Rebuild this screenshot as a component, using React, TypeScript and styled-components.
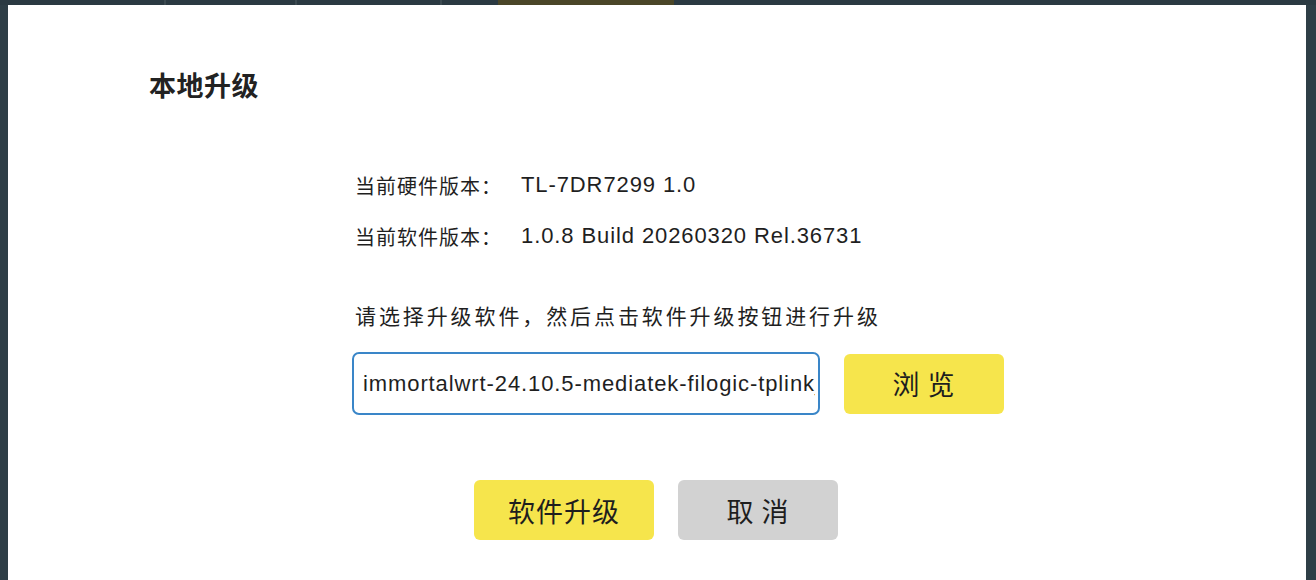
import React from "react";
import styled, { createGlobalStyle } from "styled-components";

const GlobalStyle = createGlobalStyle`
  html, body { margin: 0; padding: 0; }
  body {
    background: #2c3b43;
    font-family: "Liberation Sans", "Noto Sans CJK SC", sans-serif;
    overflow: hidden;
  }
`;

const Page = styled.div`
  width: 1316px;
  height: 580px;
  display: flex;
  flex-direction: column;
  overflow: hidden;
`;

const TopStrip = styled.div`
  height: 5px;
  display: flex;
  flex: none;
`;

const StripSeg = styled.div<{ $w?: number; $tone?: string; $divider?: boolean }>`
  box-sizing: border-box;
  width: ${(p) => (p.$w ? `${p.$w}px` : "auto")};
  flex: ${(p) => (p.$w ? "none" : "1")};
  background: ${(p) => p.$tone || "#2b3a42"};
  border-right: ${(p) => (p.$divider ? "2px solid #3c4a51" : "none")};
`;

const Stage = styled.div`
  flex: 1;
  display: flex;
  padding: 0 10px 0 8px;
  background: #2e3e46;
`;

const Modal = styled.div`
  flex: 1;
  background: #ffffff;
  display: flex;
  flex-direction: column;
  padding: 66px 0 0 0;
`;

const Title = styled.h2`
  margin: 0 0 0 141px;
  font-size: 27px;
  line-height: 32px;
  font-weight: 700;
  color: #222222;
  letter-spacing: 0.5px;
`;

const Body = styled.div`
  margin: 67px 0 0 344px;
  display: flex;
  flex-direction: column;
`;

const InfoList = styled.div`
  display: flex;
  flex-direction: column;
  gap: 21px;
`;

const InfoLine = styled.div`
  display: flex;
  align-items: center;
  height: 30px;
  color: #1f1f1f;
  font-size: 20px;
`;

const Label = styled.span`
  letter-spacing: 1px;
  width: 166px;
  padding-left: 3px;
  flex: none;
`;

const Value = styled.span`
  font-size: 22px;
  letter-spacing: 0.9px;
`;

const Hint = styled.div`
  margin-top: 51px;
  height: 30px;
  line-height: 30px;
  padding-left: 3px;
  font-size: 21px;
  letter-spacing: 2.9px;
  color: #1f1f1f;
`;

const FileRow = styled.div`
  margin-top: 20px;
  display: flex;
  align-items: center;
  gap: 24px;
`;

const FileInput = styled.input`
  box-sizing: border-box;
  width: 468px;
  height: 63px;
  border: 2px solid #3a86c8;
  border-radius: 7px;
  padding: 0 3px 0 9px;
  font-family: "Liberation Sans", sans-serif;
  font-size: 22px;
  letter-spacing: 0.9px;
  color: #1f1f1f;
  background: #ffffff;
  outline: none;
`;

const Btn = styled.button<{ $w: number; $gray?: boolean }>`
  box-sizing: border-box;
  width: ${(p) => p.$w}px;
  height: 60px;
  border: none;
  border-radius: 6px;
  background: ${(p) => (p.$gray ? "#d2d2d2" : "#f6e54c")};
  color: #1e1e1e;
  font-family: "Noto Sans CJK SC", sans-serif;
  font-size: 27px;
  letter-spacing: 1px;
  display: flex;
  align-items: center;
  justify-content: center;
  padding: 0;
  cursor: pointer;
`;

const Actions = styled.div`
  margin-top: 65px;
  display: flex;
  justify-content: center;
  gap: 24px;
  padding-right: 2px;
`;

const fileName =
  "immortalwrt-24.10.5-mediatek-filogic-tplink_tl-7dr7299-squashfs-sysupgrade.itb";

export default function App() {
  return (
    <>
      <GlobalStyle />
      <Page>
        <TopStrip>
          <StripSeg $w={166} $divider />
          <StripSeg $w={131} $divider />
          <StripSeg $w={145} $divider />
          <StripSeg $w={56} />
          <StripSeg $w={176} $tone="#4a4628" />
          <StripSeg />
        </TopStrip>
        <Stage>
          <Modal>
            <Title>本地升级</Title>
            <Body>
              <InfoList>
                <InfoLine>
                  <Label>当前硬件版本：</Label>
                  <Value>TL-7DR7299 1.0</Value>
                </InfoLine>
                <InfoLine>
                  <Label>当前软件版本：</Label>
                  <Value>1.0.8 Build 20260320 Rel.36731</Value>
                </InfoLine>
              </InfoList>
              <Hint>请选择升级软件，然后点击软件升级按钮进行升级</Hint>
              <FileRow>
                <FileInput readOnly value={fileName} />
                <Btn $w={160}>浏 览</Btn>
              </FileRow>
            </Body>
            <Actions>
              <Btn $w={180}>软件升级</Btn>
              <Btn $w={160} $gray>
                取 消
              </Btn>
            </Actions>
          </Modal>
        </Stage>
      </Page>
    </>
  );
}
